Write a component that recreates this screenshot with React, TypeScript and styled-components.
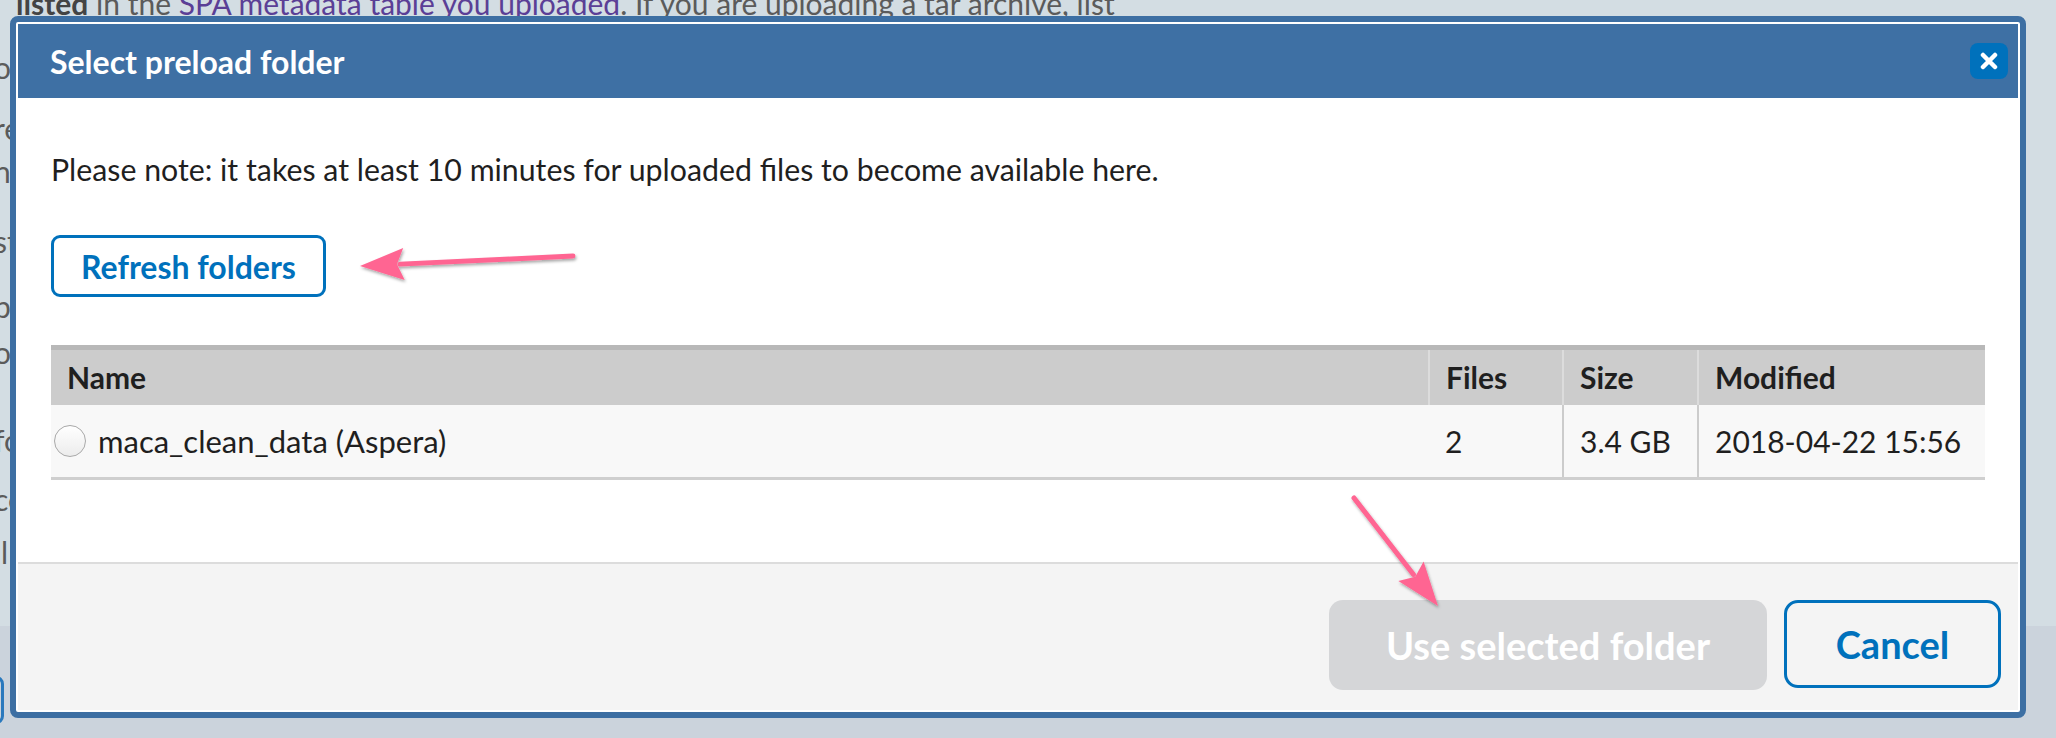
import React from "react";
import styled, { createGlobalStyle } from "styled-components";

const GlobalStyle = createGlobalStyle`
  html, body { margin: 0; padding: 0; }
  body {
    background: #d3dde3;
    font-family: Lato, "Noto Sans", sans-serif;
    overflow: hidden;
  }
  * { box-sizing: border-box; }
`;

const Page = styled.div`
  position: relative;
  width: 2056px;
  height: 738px;
  overflow: hidden;
  background: linear-gradient(#d3dde3 0 626px, #cbd3dc 626px);
`;

const PageText = styled.div`
  display: flex;
  flex-direction: column;
  margin-left: -6px;
  font-family: Lato, sans-serif;
  font-size: 30px;
  line-height: 34px;
  color: #5b5b5b;
  white-space: nowrap;
`;

const PageLine = styled.div<{ $top: number; $indent?: number }>`
  margin-top: ${(p) => p.$top}px;
  padding-left: ${(p) => p.$indent ?? 0}px;
`;

const Strong = styled.b`
  color: #444;
`;

const PageLink = styled.span`
  color: #5b3f96;
  text-decoration: underline;
`;

const PeekButton = styled.div`
  position: absolute;
  left: -40px;
  top: 676px;
  width: 44px;
  height: 48px;
  border: 3px solid #2a79bd;
  border-radius: 8px;
`;

const Modal = styled.div`
  position: absolute;
  left: 10px;
  top: 16px;
  width: 2016px;
  height: 702px;
  border: 6px solid #3d6fa3;
  border-radius: 8px;
  padding: 2px;
  background: #fff;
  display: flex;
  flex-direction: column;
`;

const Header = styled.div`
  height: 74px;
  flex: none;
  background: #3e70a4;
  display: flex;
  align-items: center;
  justify-content: space-between;
  padding: 0 10px 0 32px;
`;

const Title = styled.h1`
  margin: 0;
  font-family: Lato, sans-serif;
  font-weight: 700;
  font-size: 32px;
  color: #fff;
`;

const CloseButton = styled.button`
  width: 38px;
  height: 36px;
  border: none;
  border-radius: 8px;
  background: #0071bc;
  display: flex;
  align-items: center;
  justify-content: center;
  padding: 0;
`;

const Body = styled.div`
  flex: 1;
  padding: 0 33px;
  display: flex;
  flex-direction: column;
  align-items: flex-start;
`;

const Note = styled.p`
  margin: 53px 0 0;
  font-family: Lato, sans-serif;
  font-size: 30.3px;
  line-height: 36px;
  color: #1f1f1f;
`;

const OutlineButton = styled.button<{ $size: number; $h: number; $w: number }>`
  height: ${(p) => p.$h}px;
  width: ${(p) => p.$w}px;
  border: 3px solid #0071bc;
  border-radius: ${(p) => (p.$size > 34 ? 14 : 9)}px;
  background: transparent;
  color: #0071bc;
  font-family: Lato, sans-serif;
  font-weight: 700;
  font-size: ${(p) => p.$size}px;
  padding: 0;
`;

const RefreshButton = styled(OutlineButton)`
  margin-top: 48px;
`;

const Table = styled.table`
  margin-top: 48px;
  width: 100%;
  border-collapse: collapse;
  border-top: 5px solid #b8b8b8;
  border-bottom: 3px solid #cfcfcf;
  font-family: Lato, sans-serif;
  font-size: 30px;
  color: #1f1f1f;
`;

const HeadRow = styled.tr`
  height: 57px;
  background: #cccccc;
`;

const BodyRow = styled.tr`
  height: 74px;
  background: #f8f8f8;
`;

const Th = styled.th<{ $w?: number }>`
  text-align: left;
  font-weight: 700;
  padding: 0 0 0 16px;
  ${(p) => (p.$w ? `width: ${p.$w}px;` : "")}
  & + & {
    border-left: 2px solid #dcdcdc;
  }
`;

const Td = styled.td`
  padding: 0 0 0 16px;
  & + & {
    border-left: 2px solid #cccccc;
  }
`;

const NameCell = styled.td`
  padding: 0 0 0 3px;
  font-size: 31px;
`;

const NameInner = styled.label`
  display: flex;
  align-items: center;
  gap: 12px;
`;

const Radio = styled.span`
  width: 32px;
  height: 32px;
  border-radius: 50%;
  border: 1px solid #a9a9a9;
  background: linear-gradient(#ffffff, #ececec);
  flex: none;
`;

const Footer = styled.div`
  flex: none;
  height: 148px;
  border-top: 2px solid #dcdcdc;
  background: #f4f4f4;
  display: flex;
  justify-content: flex-end;
  align-items: flex-start;
  gap: 17px;
  padding: 36px 17px 0 0;
`;

const DisabledButton = styled.button`
  width: 438px;
  height: 90px;
  border: none;
  border-radius: 14px;
  background: #d5d6d8;
  color: #fff;
  font-family: Lato, sans-serif;
  font-weight: 700;
  font-size: 38px;
  padding: 0;
`;

const Annotations = styled.svg`
  position: absolute;
  left: 0;
  top: 0;
  pointer-events: none;
`;

function Arrow({ x1, y1, x2, y2 }: { x1: number; y1: number; x2: number; y2: number }) {
  const dx = x2 - x1;
  const dy = y2 - y1;
  const len = Math.hypot(dx, dy);
  const ux = dx / len;
  const uy = dy / len;
  const headLen = 44;
  const half = 16;
  const bx = x2 - ux * headLen;
  const by = y2 - uy * headLen;
  const px = -uy * half;
  const py = ux * half;
  return (
    <g filter="url(#shadow)">
      <line x1={x1} y1={y1} x2={bx + ux * 4} y2={by + uy * 4} stroke="#ff6592" strokeWidth={5} strokeLinecap="round" />
      <polygon points={`${x2},${y2} ${bx + px},${by + py} ${bx + ux * 7},${by + uy * 7} ${bx - px},${by - py}`} fill="#ff6592" />
    </g>
  );
}

export default function App() {
  return (
    <>
      <GlobalStyle />
      <Page>
        <PageText>
          <PageLine $top={-14} $indent={22}>
            <Strong>listed</Strong> in the <PageLink>SPA metadata table you uploaded</PageLink>. If you are uploading a tar archive, list
          </PageLine>
          <PageLine $top={30}>otherwise the files will not be found</PageLine>
          <PageLine $top={27}>re</PageLine>
          <PageLine $top={9}>nn</PageLine>
          <PageLine $top={36}>sta</PageLine>
          <PageLine $top={31}>pa</PageLine>
          <PageLine $top={12}>ob</PageLine>
          <PageLine $top={54}>fol</PageLine>
          <PageLine $top={25}>co</PageLine>
          <PageLine $top={19}>ll</PageLine>
        </PageText>
        <PeekButton />
        <Modal>
          <Header>
            <Title>Select preload folder</Title>
            <CloseButton aria-label="Close">
              <svg width="18" height="18" viewBox="0 0 18 18">
                <path d="M3 3 L15 15 M15 3 L3 15" stroke="#fff" strokeWidth="4.5" strokeLinecap="round" />
              </svg>
            </CloseButton>
          </Header>
          <Body>
            <Note>Please note: it takes at least 10 minutes for uploaded files to become available here.</Note>
            <RefreshButton $size={32} $h={62} $w={275}>Refresh folders</RefreshButton>
            <Table>
              <thead>
                <HeadRow>
                  <Th>Name</Th>
                  <Th $w={134}>Files</Th>
                  <Th $w={135}>Size</Th>
                  <Th $w={287}>Modified</Th>
                </HeadRow>
              </thead>
              <tbody>
                <BodyRow>
                  <NameCell>
                    <NameInner>
                      <Radio />
                      maca_clean_data (Aspera)
                    </NameInner>
                  </NameCell>
                  <Td>2</Td>
                  <Td>3.4 GB</Td>
                  <Td>2018-04-22 15:56</Td>
                </BodyRow>
              </tbody>
            </Table>
          </Body>
          <Footer>
            <DisabledButton disabled>Use selected folder</DisabledButton>
            <OutlineButton $size={38} $h={88} $w={217}>Cancel</OutlineButton>
          </Footer>
        </Modal>
        <Annotations width="2056" height="738" viewBox="0 0 2056 738">
          <defs>
            <filter id="shadow" x="-20%" y="-20%" width="140%" height="140%">
              <feDropShadow dx="1" dy="2" stdDeviation="1.5" floodColor="#000" floodOpacity="0.35" />
            </filter>
          </defs>
          <Arrow x1={573} y1={256} x2={360} y2={266} />
          <Arrow x1={1354} y1={498} x2={1438} y2={606} />
        </Annotations>
      </Page>
    </>
  );
}
